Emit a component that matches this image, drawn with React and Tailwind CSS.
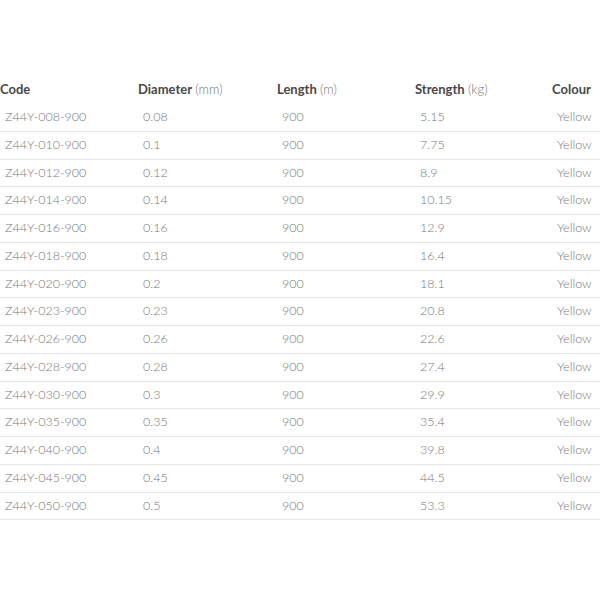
const rows = [
  ["Z44Y-008-900", "0.08", "900", "5.15"],
  ["Z44Y-010-900", "0.1", "900", "7.75"],
  ["Z44Y-012-900", "0.12", "900", "8.9"],
  ["Z44Y-014-900", "0.14", "900", "10.15"],
  ["Z44Y-016-900", "0.16", "900", "12.9"],
  ["Z44Y-018-900", "0.18", "900", "16.4"],
  ["Z44Y-020-900", "0.2", "900", "18.1"],
  ["Z44Y-023-900", "0.23", "900", "20.8"],
  ["Z44Y-026-900", "0.26", "900", "22.6"],
  ["Z44Y-028-900", "0.28", "900", "27.4"],
  ["Z44Y-030-900", "0.3", "900", "29.9"],
  ["Z44Y-035-900", "0.35", "900", "35.4"],
  ["Z44Y-040-900", "0.4", "900", "39.8"],
  ["Z44Y-045-900", "0.45", "900", "44.5"],
  ["Z44Y-050-900", "0.5", "900", "53.3"],
];

export default function App() {
  return (
    <div className="w-[600px] h-[600px] bg-white pt-[76px]" style={{ fontFamily: "Lato, 'Open Sans', sans-serif" }}>
      <div className="grid grid-cols-[138px_139px_138px_137px_48px] h-[28px] items-center text-[13px] text-[#484848]">
        <div className="font-bold">Code</div>
        <div><span className="font-bold">Diameter</span> <span className="font-light text-[#777]">(mm)</span></div>
        <div><span className="font-bold">Length</span> <span className="font-light text-[#777]">(m)</span></div>
        <div><span className="font-bold">Strength</span> <span className="font-light text-[#777]">(kg)</span></div>
        <div className="font-bold">Colour</div>
      </div>
      {rows.map((r) => (
        <div key={r[0]} className="grid grid-cols-[138px_139px_138px_137px_48px] h-[27.75px] items-center border-b border-[#e6e6e6] text-[12.5px] font-light text-[#777]">
          <div className="pl-[5px]">{r[0]}</div>
          <div className="pl-[5px]">{r[1]}</div>
          <div className="pl-[5px]">{r[2]}</div>
          <div className="pl-[5px]">{r[3]}</div>
          <div className="pl-[5px] whitespace-nowrap">Yellow</div>
        </div>
      ))}
    </div>
  );
}
